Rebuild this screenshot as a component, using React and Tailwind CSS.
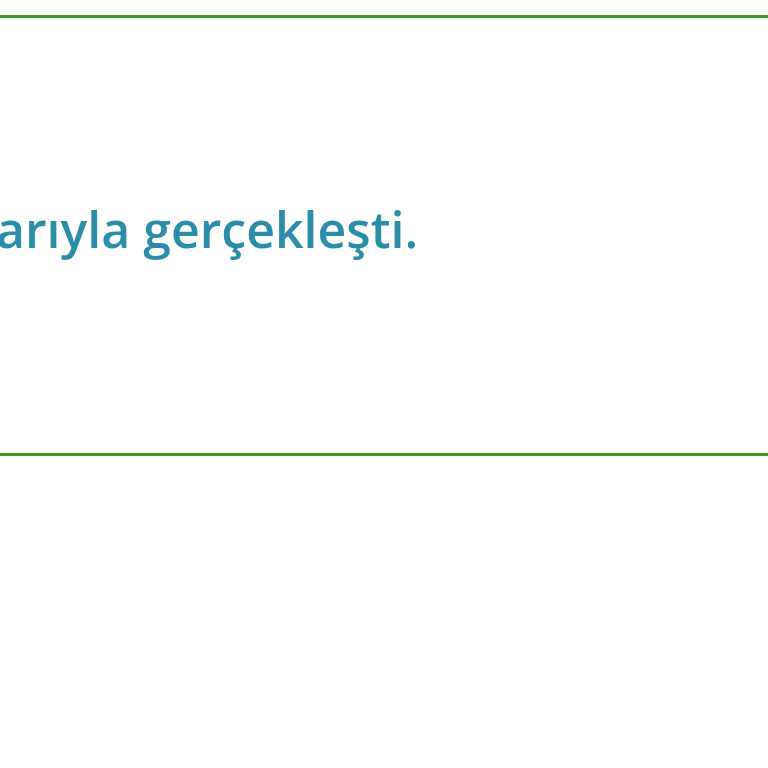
export default function App() {
  return (
    <div className="w-[768px] h-[768px] bg-white overflow-hidden pt-[15px]" style={{ fontFamily: '"Open Sans", "Noto Sans", sans-serif' }}>
      <div className="h-[441px] border-y-[3px] border-[#3a9b1c] pt-[186px]">
        <p className="text-[50px] leading-[50px] font-semibold text-[#2b8da7] ml-[-4px] whitespace-nowrap">
          arıyla gerçekleşti.
        </p>
      </div>
    </div>
  );
}
